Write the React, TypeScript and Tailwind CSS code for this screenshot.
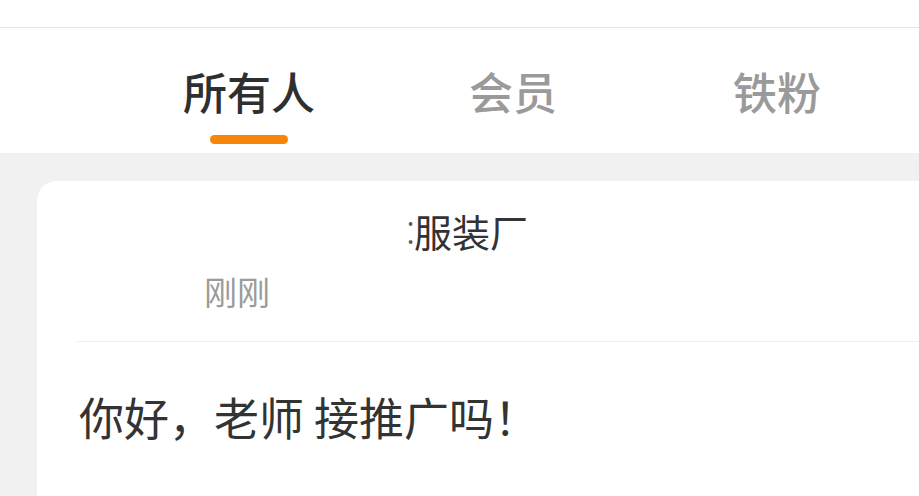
import React from 'react';

const tabs = ['所有人', '会员', '铁粉'];

export default function App() {
  return (
    <div
      className="w-[919px] h-[496px] overflow-hidden bg-[#f1f1f1]"
      style={{ fontFamily: '"Noto Sans CJK SC", "Noto Sans", sans-serif' }}
    >
      {/* Top bar */}
      <div className="h-[28px] bg-white border-b border-[#e6e6e6]" />

      {/* Tabs */}
      <div className="h-[125px] bg-white flex pl-[117px]">
        {tabs.map((t, i) => (
          <div key={t} className="w-[264px] flex flex-col items-center">
            <div
              className={
                i === 0
                  ? 'mt-[28px] text-[44px] leading-[70px] font-medium text-[#2f2f2f]'
                  : 'mt-[28px] text-[44px] leading-[70px] font-medium text-[#9a9a9a]'
              }
            >
              {t}
            </div>
            {i === 0 && <div className="mt-[9px] w-[78px] h-[9px] rounded-full bg-[#f7850a]" />}
          </div>
        ))}
      </div>

      {/* Card */}
      <div className="mt-[28px] ml-[37px] mr-[-40px] h-[400px] bg-white rounded-[20px]">
        <div className="flex items-center pl-[355px] pt-[22px]">
          <span className="w-[22px] text-right text-[30px] leading-[56px] text-[#555]">⁚</span>
          <span className="text-[38px] leading-[56px] text-[#333]">服装厂</span>
        </div>
        <div className="pl-[167px] mt-[8px] text-[33px] leading-[48px] text-[#9b9b9b]">刚刚</div>
        <div className="ml-[40px] mt-[26px] border-t border-[#eeeeee]" />
        <div className="pl-[42px] mt-[45px] text-[45px] leading-[60px] text-[#333]">
          你好，老师 接推广吗！
        </div>
      </div>
    </div>
  );
}
